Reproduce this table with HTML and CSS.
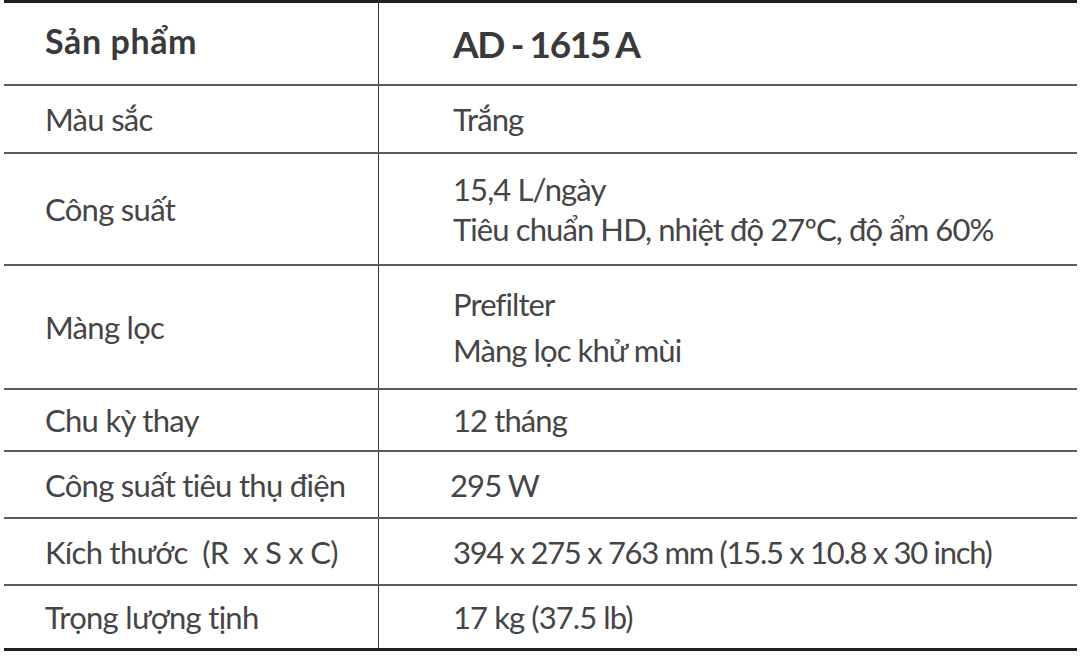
FILE: index.html
```html
<!DOCTYPE html>
<html lang="vi">
<head>
<meta charset="utf-8">
<link rel="stylesheet" href="styles.css">
</head>
<body>
<div class="spec">
  <div class="row head">
    <div class="c1">Sản phẩm</div>
    <div class="c2">AD - 1615 A</div>
  </div>
  <div class="row r1">
    <div class="c1">Màu sắc</div>
    <div class="c2">Trắng</div>
  </div>
  <div class="row r2">
    <div class="c1">Công suất</div>
    <div class="c2 multi"><div>15,4 L/ngày</div><div>Tiêu chuẩn HD, nhiệt độ 27ºC, độ ẩm 60%</div></div>
  </div>
  <div class="row r3">
    <div class="c1">Màng lọc</div>
    <div class="c2 multi wide"><div>Prefilter</div><div>Màng lọc khử mùi</div></div>
  </div>
  <div class="row r4">
    <div class="c1">Chu kỳ thay</div>
    <div class="c2">12 tháng</div>
  </div>
  <div class="row r5">
    <div class="c1">Công suất tiêu thụ điện</div>
    <div class="c2 tight">295 W</div>
  </div>
  <div class="row r6">
    <div class="c1">Kích thước&nbsp; (R&nbsp; x S x C)</div>
    <div class="c2 numeric">394 x 275 x 763 mm (15.5 x 10.8 x 30 inch)</div>
  </div>
  <div class="row r7 last">
    <div class="c1">Trọng lượng tịnh</div>
    <div class="c2">17 kg (37.5 lb)</div>
  </div>
</div>
</body>
</html>
```
FILE: styles.css
```css
html, body {
  margin: 0;
  padding: 0;
  background: #ffffff;
}
body {
  font-family: Lato, "Open Sans", sans-serif;
  color: #454547;
}
.spec {
  margin-left: 4px;
  width: 1073px;
  border-top: 3px solid #231f20;
  border-bottom: 3px solid #231f20;
}
.row {
  display: flex;
  border-bottom: 2px solid #5c5c5c;
  box-sizing: border-box;
}
.row.last {
  border-bottom: none;
}
.c1 {
  width: 375px;
  flex: none;
  box-sizing: border-box;
  padding-left: 41px;
  border-right: 1px solid #333;
  display: flex;
  align-items: center;
  font-size: 31px;
  letter-spacing: -0.7px;
}
.c2 {
  flex: 1;
  padding-left: 74px;
  display: flex;
  align-items: center;
  font-size: 31px;
  letter-spacing: -0.9px;
}
.c2.tight {
  padding-left: 71px;
}
.c2.numeric {
  letter-spacing: -1.3px;
}
.multi {
  flex-direction: column;
  align-items: flex-start;
  justify-content: center;
  line-height: 40px;
}
.multi.wide {
  line-height: 46px;
}
.head .c1, .head .c2 {
  font-weight: 700;
  color: #3a3a3c;
}
.head .c1 {
  font-size: 34px;
  letter-spacing: 0.6px;
  padding-bottom: 6px;
}
.head .c2 {
  font-size: 37px;
  letter-spacing: -1.4px;
  word-spacing: -1px;
  padding-bottom: 0;
}
.head { height: 83px; }
.r1 { height: 68px; }
.r2 { height: 112px; }
.r3 { height: 124px; }
.r4 { height: 62px; }
.r5 { height: 67px; }
.r6 { height: 67px; }
.r7 { height: 62px; }
```
